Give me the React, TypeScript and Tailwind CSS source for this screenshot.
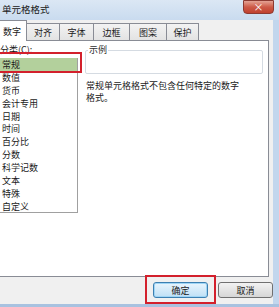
const categories = ["常规", "数值", "货币", "会计专用", "日期", "时间", "百分比", "分数", "科学记数", "文本", "特殊", "自定义"];
const tabs = ["数字", "对齐", "字体", "边框", "图案", "保护"];
const tabWidths = ["w-[27px]", "w-[33px]", "w-[34px]", "w-[36px]", "w-[37px]", "w-[32px]"];

export default function App() {
  return (
    <div className="relative h-[307px] w-[279px] overflow-hidden bg-[#bfd4ec] text-[9px] leading-none text-[#1a1a1a] [font-family:'Noto_Sans_CJK_SC',sans-serif]">
      {/* title bar */}
      <div className="flex h-[20px] items-start justify-between bg-gradient-to-b from-[#dbe7f4] to-[#c9dbef]">
        <span className="mt-[5px] pl-[2px] text-[9.5px] text-[#202020]">单元格格式</span>
        <div className="mr-[5px] flex h-[14px] w-[31px] items-center justify-center rounded-b-[4px] border border-[#8c3a32] bg-gradient-to-b from-[#e3a294] via-[#cd5a48] to-[#c0402e] text-[10px] text-white">
          ×
        </div>
      </div>

      <div className="flex">
        <div className="h-[284px] w-[273px] bg-[#f0f0f0]">
          {/* tabs */}
          <div className="flex h-[20px] items-end pt-[1px]">
            {tabs.map((t, i) =>
              i === 0 ? (
                <div
                  key={t}
                  className={`${tabWidths[i]} relative z-10 -mb-px flex h-[21px] items-center justify-center border border-b-0 border-l-0 border-[#898c95] bg-white pr-[2px]`}
                >
                  {t}
                </div>
              ) : (
                <div
                  key={t}
                  className={`${tabWidths[i]} flex h-[17px] items-center justify-center border border-l-0 border-b-0 border-[#898c95] bg-gradient-to-b from-[#f3f3f3] to-[#e3e3e3]`}
                >
                  {t}
                </div>
              )
            )}
          </div>

          {/* panel */}
          <div className="relative h-[237px] w-[269px] border-y border-r border-[#898c95] bg-white">
            <div className="mt-[4px] h-[10px]">分类(C):</div>

            <div className="mt-[3px] flex">
              <div className="h-[155px] w-[78px] border-b border-r border-[#a0a0a0] bg-white">
                {categories.map((c, i) => (
                  <div
                    key={c}
                    className={`flex h-[12.9px] items-center pl-[2px] ${i === 0 ? "bg-[#b3d09c]" : ""}`}
                  >
                    {c}
                  </div>
                ))}
              </div>

              <div className="ml-[7px] mt-[-8px] w-[178px]">
                <div className="relative h-[24px] rounded-[2px] border border-[#d5dbe2]">
                  <span className="absolute left-[2px] top-[-6px] bg-white px-[1px] text-[#303030]">示例</span>
                </div>
                <div className="mt-[6px] pl-[1px] leading-[12px]">
                  常规单元格格式不包含任何特定的数字
                  <br />
                  格式。
                </div>
              </div>
            </div>

            {/* highlight frame around selected category */}
            <div className="absolute left-[-2px] top-[11px] h-[21px] w-[84px] border-[2.5px] border-[#d3202c]" />
          </div>

          {/* buttons */}
          <div className="mt-[5px] flex gap-[10px] pl-[153px]">
            <div className="relative flex h-[16px] w-[55px] items-center justify-center rounded-[3px] border border-[#3c7fb1] bg-gradient-to-b from-[#e9f5fd] to-[#bfe0f5] shadow-[inset_0_0_0_1px_#9fd5f5]">
              确定
              <div className="absolute left-[-9px] top-[-8px] h-[29px] w-[71px] border-[2.5px] border-[#d3202c]" />
            </div>
            <div className="flex h-[16px] w-[55px] items-center justify-center rounded-[3px] border border-[#707070] bg-gradient-to-b from-[#f2f2f2] to-[#d6d6d6]">
              取消
            </div>
          </div>
        </div>
        <div className="h-[284px] flex-1 bg-[#c2d6ed]" />
      </div>
      <div className="h-[3px] bg-[#a8c2e0]" />
    </div>
  );
}
